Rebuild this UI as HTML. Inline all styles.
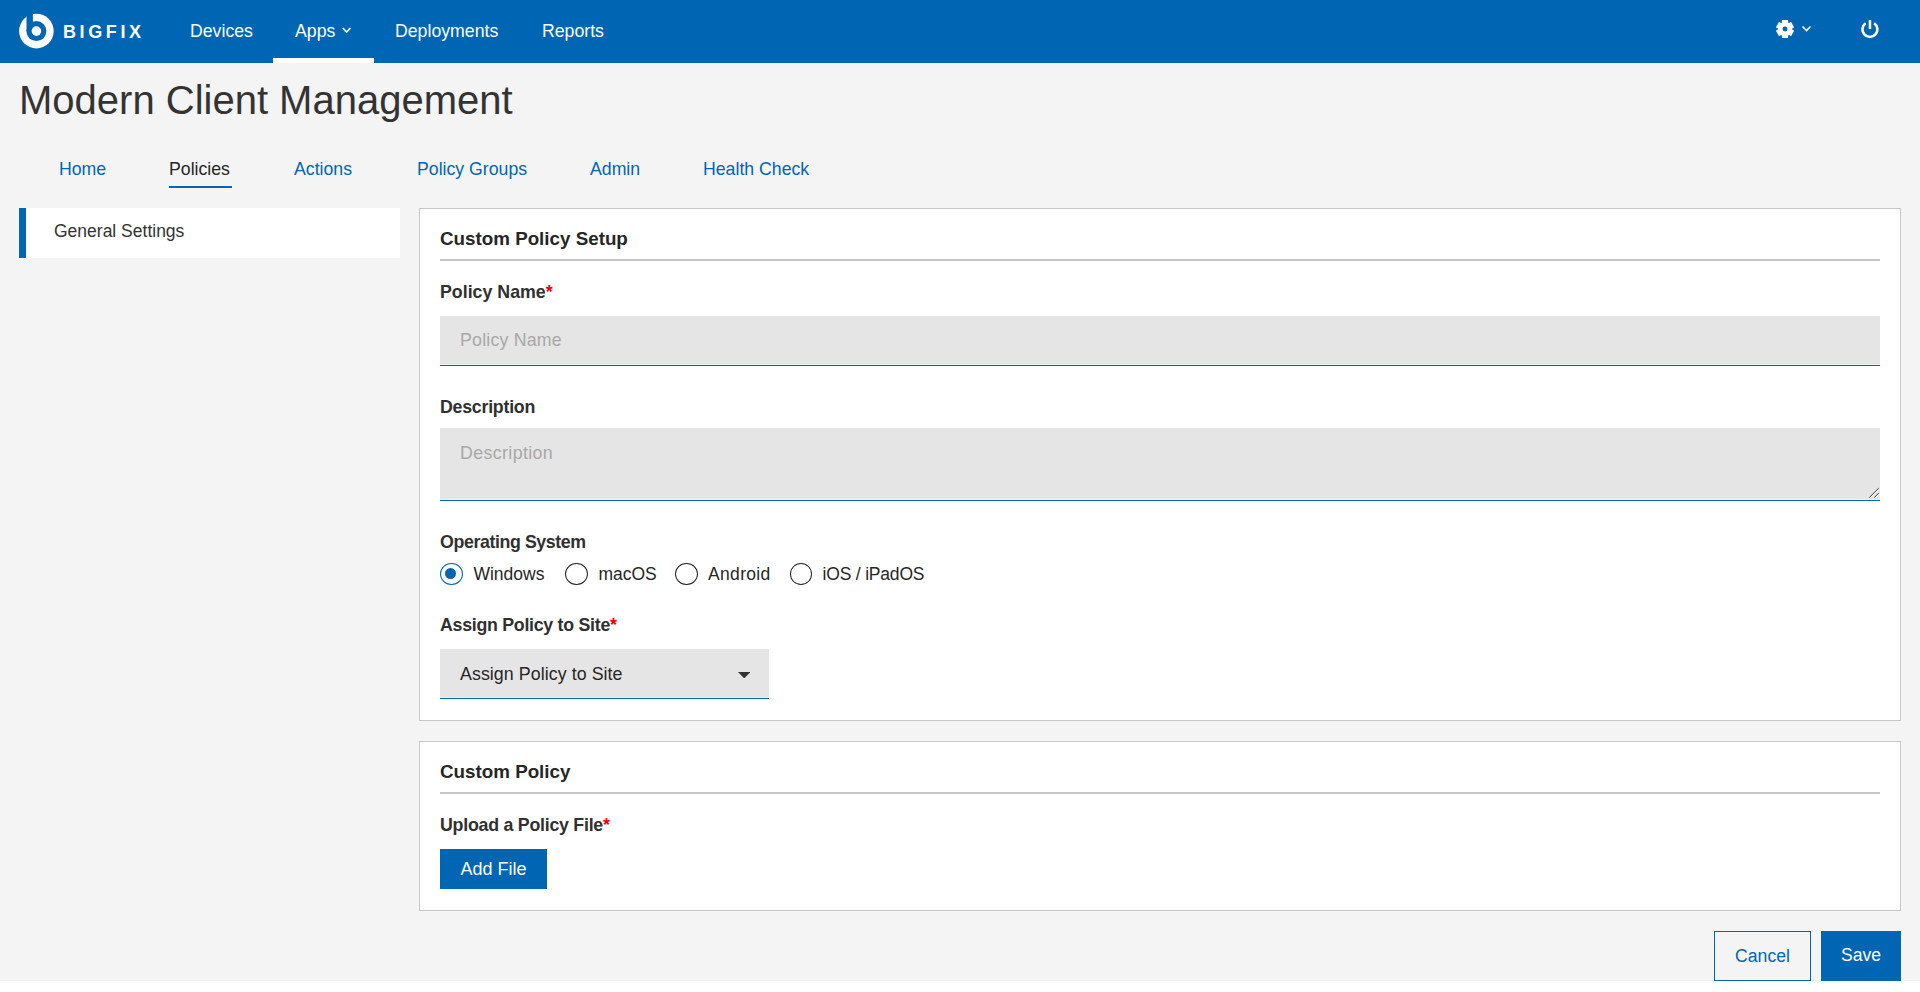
<!DOCTYPE html>
<html>
<head>
<meta charset="utf-8">
<style>
*{box-sizing:border-box;margin:0;padding:0}
html,body{width:1920px;height:992px;overflow:hidden;background:#fff}
body{font-family:"Liberation Sans",sans-serif;color:#262626;position:relative}
.abs{position:absolute;white-space:nowrap}
#page{position:absolute;left:0;top:0;width:1920px;height:981px;background:#f4f4f4}
#nav{position:absolute;left:0;top:0;width:1920px;height:63px;background:#0066b3}
.nl{position:absolute;top:0;height:63px;line-height:62px;color:#fff;font-size:17.7px}
#appsbar{position:absolute;left:273px;top:58px;width:101px;height:5px;background:#fff}
#title{left:19px;top:76px;font-size:40px;color:#333;line-height:48px}
.tab{position:absolute;top:157px;font-size:17.7px;color:#0066b3;line-height:24px}
.tab.act{color:#262626}
#tabline{position:absolute;left:169px;top:186px;width:63px;height:2px;background:#0066b3}
#side{position:absolute;left:19px;top:208px;width:381px;height:50px;background:#fff;border-left:7px solid #0066b3}
#side span{position:absolute;left:28px;top:15px;font-size:17.5px;color:#333;line-height:17.5px;white-space:nowrap}
.card{position:absolute;left:419px;width:1482px;background:#fff;border:1px solid #c8c8c8}
.h{position:absolute;left:20px;font-weight:bold;font-size:18.8px;color:#262626;line-height:18.8px}
.sep{position:absolute;left:20px;width:1440px;height:2px;background:#c6c6c6}
.lbl{position:absolute;left:20px;font-weight:bold;font-size:17.8px;color:#303030;line-height:17.8px;white-space:nowrap}
.req{color:#e00}
.inp{position:absolute;left:20px;width:1440px;background:#e5e5e5;border-bottom:1px solid #0066b3;box-shadow:inset 0 -1px 0 #f4f0ed}
.ph{position:absolute;left:20px;font-size:17.8px;color:#a8a8a8;line-height:17.8px;white-space:nowrap}
.radio{position:absolute;width:22.5px;height:22px;border-radius:50%;border:1.6px solid #262626}
.radio.on{border-color:#0066b3}
.radio.on::after{content:"";position:absolute;left:4.15px;top:3.9px;width:11px;height:11px;border-radius:50%;background:#0066b3}
.rl{position:absolute;font-size:17.5px;color:#262626;line-height:17.5px;white-space:nowrap}
.btn{position:absolute;background:#0066b3;color:#fff;font-size:18px;text-align:center;white-space:nowrap}
</style>
</head>
<body>
<div id="page"></div>
<div id="nav">
  <svg style="position:absolute;left:0;top:0" width="60" height="63" viewBox="0 0 60 63">
    <circle cx="36.4" cy="31.1" r="17.3" fill="#fff"/>
    <circle cx="36.4" cy="31.1" r="10" fill="#0066b3"/>
    <rect x="26.5" y="8" width="6.4" height="23.1" fill="#0066b3"/>
    <circle cx="36.4" cy="31.1" r="4.8" fill="#fff"/>
  </svg>
  <div class="abs" style="left:63px;top:23px;color:#fff;font-size:18px;font-weight:bold;letter-spacing:3.6px;line-height:18px">BIGFIX</div>
  <div class="nl" style="left:190px">Devices</div>
  <div class="nl" style="left:295px">Apps</div>
  <div class="nl" style="left:395px">Deployments</div>
  <div class="nl" style="left:542px">Reports</div>
  <svg style="position:absolute;left:340px;top:24px" width="14" height="12" viewBox="0 0 14 12"><polyline points="2.8,4 6.6,8 10.4,4" fill="none" stroke="#fff" stroke-width="1.6"/></svg>
  <svg style="position:absolute;left:1767.1px;top:20px" width="36" height="18" viewBox="-18 -9 36 18"><g fill="#fff"><circle r="7.1"/><path transform="rotate(0)" d="M-3.4 -5 L-2.95 -8.95 L2.95 -8.95 L3.4 -5 Z"/><path transform="rotate(60)" d="M-3.4 -5 L-2.95 -8.75 L2.95 -8.75 L3.4 -5 Z"/><path transform="rotate(120)" d="M-3.4 -5 L-2.95 -8.75 L2.95 -8.75 L3.4 -5 Z"/><path transform="rotate(180)" d="M-3.4 -5 L-2.95 -8.95 L2.95 -8.95 L3.4 -5 Z"/><path transform="rotate(240)" d="M-3.4 -5 L-2.95 -8.75 L2.95 -8.75 L3.4 -5 Z"/><path transform="rotate(300)" d="M-3.4 -5 L-2.95 -8.75 L2.95 -8.75 L3.4 -5 Z"/></g><circle r="2.45" fill="#0066b3"/></svg>
  <svg style="position:absolute;left:1800px;top:22.2px" width="14" height="12" viewBox="0 0 14 12"><polyline points="2.5,4.5 6.5,8.5 10.5,4.5" fill="none" stroke="#fff" stroke-width="1.6"/></svg>
  <svg style="position:absolute;left:1858.1px;top:17.3px" width="24" height="24" viewBox="0 0 24 24"><path d="M7.6 6.3 A7.5 7.5 0 1 0 16.2 6.3" fill="none" stroke="#fff" stroke-width="2.6"/><rect x="10.7" y="3" width="2.5" height="9" fill="#fff"/></svg>
  <div id="appsbar"></div>
</div>
<div class="abs" id="title">Modern Client Management</div>
<div class="tab" style="left:59px">Home</div>
<div class="tab act" style="left:169px">Policies</div>
<div class="tab" style="left:294px">Actions</div>
<div class="tab" style="left:417px">Policy Groups</div>
<div class="tab" style="left:590px">Admin</div>
<div class="tab" style="left:703px">Health Check</div>
<div id="tabline"></div>
<div id="side"><span>General Settings</span></div>

<div class="card" style="top:208px;height:513px">
  <div class="h" style="top:20.85px">Custom Policy Setup</div>
  <div class="sep" style="top:50px"></div>
  <div class="lbl" style="top:74.98px">Policy Name<span class="req">*</span></div>
  <div class="inp" style="top:107px;height:50px"><div class="ph" style="top:15.98px;letter-spacing:0.19px">Policy Name</div></div>
  <div class="lbl" style="top:189.88px;letter-spacing:-0.25px">Description</div>
  <div class="inp" style="top:219px;height:73px"><div class="ph" style="top:16.68px;letter-spacing:0.38px">Description</div>
    <svg style="position:absolute;right:0;bottom:1px" width="15" height="15" viewBox="0 0 15 15"><path d="M5.1 14.1 L14.5 4.8 M10.1 14.1 L14.5 9.9" stroke="#fff" stroke-width="0.9" fill="none"/><path d="M4.4 13.4 L13.8 4.1 M9.4 13.4 L13.8 9.2" stroke="#3a3a3a" stroke-width="1" fill="none"/></svg></div>
  <div class="lbl" style="top:324.88px;letter-spacing:-0.4px">Operating System</div>
  <div class="radio on" style="left:20px;top:354px"></div><div class="rl" style="left:53.4px;top:356.92px">Windows</div>
  <div class="radio" style="left:145.2px;top:354px"></div><div class="rl" style="left:178.4px;top:356.92px">macOS</div>
  <div class="radio" style="left:255px;top:354px"></div><div class="rl" style="left:288.1px;top:356.92px;letter-spacing:0.3px">Android</div>
  <div class="radio" style="left:369.8px;top:354px"></div><div class="rl" style="left:402.6px;top:356.92px;letter-spacing:-0.2px">iOS / iPadOS</div>
  <div class="lbl" style="top:407.98px;letter-spacing:-0.28px">Assign Policy to Site<span class="req">*</span></div>
  <div class="inp" style="top:440px;height:50px;width:329px"><div class="ph" style="top:16.88px;color:#262626;letter-spacing:0.07px">Assign Policy to Site</div>
    <svg style="position:absolute;left:297.8px;top:22.9px" width="12.4" height="6.4" viewBox="0 0 12.4 6.4"><path d="M0 0 H12.4 L6.2 6.4 Z" fill="#333"/></svg></div>
</div>

<div class="card" style="top:741px;height:170px">
  <div class="h" style="top:20.95px">Custom Policy</div>
  <div class="sep" style="top:50px"></div>
  <div class="lbl" style="top:74.78px;letter-spacing:-0.25px">Upload a Policy File<span class="req">*</span></div>
  <div class="btn" style="left:20px;top:107px;width:107px;height:40px"><span style="position:absolute;left:0;right:0;top:10.85px;line-height:18px">Add File</span></div>
</div>

<div class="btn" style="left:1714px;top:931px;width:97px;height:50px;background:transparent;border:1px solid #0066b3;color:#0066b3"><span style="position:absolute;left:0;right:0;top:15.9px;line-height:17.6px;font-size:17.6px">Cancel</span></div>
<div class="btn" style="left:1821px;top:931px;width:80px;height:50px"><span style="position:absolute;left:0;right:0;top:16.4px;line-height:17.6px;font-size:17.6px">Save</span></div>
</body>
</html>
